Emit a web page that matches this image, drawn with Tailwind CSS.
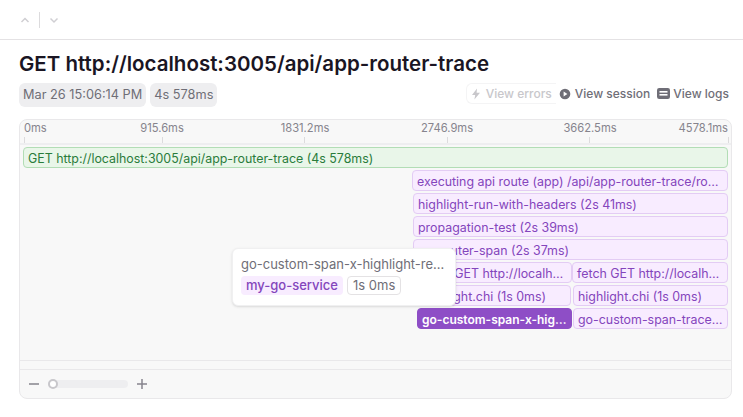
<!DOCTYPE html>
<html lang="en">
<head>
    <meta charset="UTF-8">
    <title>Trace</title>
    <script src="https://cdn.jsdelivr.net/npm/@tailwindcss/browser@4"></script>
</head>
<body class="w-[743px] h-[417px] overflow-hidden bg-white font-['Inter','Liberation_Sans',sans-serif] text-[#6f6e77]">
    <!-- top nav -->
    <div class="h-10 flex items-center pl-[19px] border-b border-[#e4e2e4]">
        <svg class="w-3 h-3" viewBox="0 0 12 12" fill="none" stroke="#d0cfd3" stroke-width="1.5"><path d="M2.5 8 L6 4.5 L9.5 8"/></svg>
        <div class="w-px h-4 bg-[#dcdbdd] mx-[8px]"></div>
        <svg class="w-3 h-3" viewBox="0 0 12 12" fill="none" stroke="#d0cfd3" stroke-width="1.5"><path d="M2.5 4.5 L6 8 L9.5 4.5"/></svg>
    </div>

    <div class="pl-[19px] pr-[11px]">
        <h1 class="mt-3 text-[20.5px] leading-[24px] font-semibold text-[#1a1523] whitespace-nowrap">GET http://localhost:3005/api/app-router-trace</h1>

        <div class="mt-[7px] flex items-start justify-between pr-[3px]">
            <div class="flex gap-1 text-[12.75px]">
                <span class="h-6 leading-6 px-1 rounded-md bg-[#eeeef0]">Mar 26 15:06:14 PM</span>
                <span class="h-6 leading-6 px-1 rounded-md bg-[#eeeef0]">4s 578ms</span>
            </div>
            <div class="flex items-center text-[12px] font-medium">
                <span class="h-[21px] flex items-center gap-1 pl-[3px] pr-1 rounded-l-md border border-r-0 border-[#f4f4f5] text-[#c8c7cb]">
                    <svg class="w-3 h-3" viewBox="0 0 12 12" fill="#c8c7cb"><path d="M7 0.5 L2 7 H5.2 L4.4 11.5 L10 4.8 H6.6 Z"/></svg>
                    View errors
                </span>
                <span class="flex items-center gap-1 ml-[3px]">
                    <svg class="w-3 h-3" viewBox="0 0 12 12"><circle cx="6" cy="6" r="5.3" fill="#6f6e77"/><path d="M4.6 3.6 L8.4 6 L4.6 8.4 Z" fill="#fff"/></svg>
                    View session
                </span>
                <span class="flex items-center gap-[3px] ml-[7px]">
                    <svg class="w-[13px] h-[11px]" viewBox="0 0 13 11"><rect width="13" height="11" rx="2.2" fill="#6f6e77"/><rect x="2.5" y="3" width="8" height="1.6" fill="#fff"/><rect x="2.5" y="6" width="8" height="1.6" fill="#fff"/></svg>
                    View logs
                </span>
            </div>
        </div>

        <!-- timeline panel -->
        <div class="relative mt-3 h-[280px] rounded-lg border border-[#e9e8ea] bg-[#f8f8f8] flex flex-col">
            <div class="relative h-[25px] border-b-2 border-[#eeeef0] text-[11.2px] leading-[16px] text-[#86848d] shrink-0">
                <span class="absolute top-0 left-[4px]">0ms</span>
                <span class="absolute top-0 left-[142px] -translate-x-1/2">915.6ms</span>
                <span class="absolute top-0 left-[285px] -translate-x-1/2">1831.2ms</span>
                <span class="absolute top-0 left-[427px] -translate-x-1/2">2746.9ms</span>
                <span class="absolute top-0 left-[570px] -translate-x-1/2">3662.5ms</span>
                <span class="absolute top-0 left-[708px] -translate-x-full">4578.1ms</span>
                <i class="absolute bottom-0 h-[6px] left-[4px] w-px bg-[#dcdbdd]"></i>
                <i class="absolute bottom-0 h-[6px] left-[142px] w-px bg-[#dcdbdd]"></i>
                <i class="absolute bottom-0 h-[6px] left-[284px] w-px bg-[#dcdbdd]"></i>
                <i class="absolute bottom-0 h-[6px] left-[427px] w-px bg-[#dcdbdd]"></i>
                <i class="absolute bottom-0 h-[6px] left-[569px] w-px bg-[#dcdbdd]"></i>
                <i class="absolute bottom-0 h-[6px] left-[708px] w-px bg-[#dcdbdd]"></i>
            </div>

            <div class="flex-1 pl-[3px] pt-[2px] flex flex-col gap-[2px] text-[12.4px] leading-[21px] text-[#8445bc]">
                <div class="h-[21px] w-[705px] px-1 rounded border border-[#b2ddb5] bg-[#e9f6e9] text-[#297c3b] truncate">GET http://localhost:3005/api/app-router-trace (4s 578ms)</div>
                <div class="h-[21px] ml-[389px] w-[316px] pl-1 pr-[2px] rounded border border-[#e3ccf4] bg-[#f8ecff] truncate">executing api route (app) /api/app-router-trace/route</div>
                <div class="h-[21px] ml-[390px] w-[315px] px-1 rounded border border-[#e3ccf4] bg-[#f8ecff] truncate">highlight-run-with-headers (2s 41ms)</div>
                <div class="h-[21px] ml-[390px] w-[315px] px-1 rounded border border-[#e3ccf4] bg-[#f8ecff] truncate">propagation-test (2s 39ms)</div>
                <div class="h-[21px] ml-[390px] w-[315px] px-1 rounded border border-[#e3ccf4] bg-[#f8ecff] truncate">go-router-span (2s 37ms)</div>
                <div class="h-[21px] ml-[393px] flex">
                    <div class="w-[156px] px-1 rounded border border-[#e3ccf4] bg-[#f8ecff] truncate">fetch GET http://localhost:3005</div>
                    <div class="w-[156px] px-1 rounded border border-[#e3ccf4] bg-[#f8ecff] truncate">fetch GET http://localhost:3005</div>
                </div>
                <div class="h-[21px] ml-[394px] flex gap-[2px]">
                    <div class="w-[154px] px-1 rounded border border-[#e3ccf4] bg-[#f8ecff] truncate">highlight.chi (1s 0ms)</div>
                    <div class="w-[155px] px-1 rounded border border-[#e3ccf4] bg-[#f8ecff] truncate">highlight.chi (1s 0ms)</div>
                </div>
                <div class="h-[21px] ml-[394px] flex gap-px">
                    <div class="w-[155px] px-1 rounded border border-[#8e4ec6] bg-[#8e4ec6] text-white text-[12px] font-semibold truncate">go-custom-span-x-highlight-request</div>
                    <div class="w-[155px] px-1 rounded border border-[#e3ccf4] bg-[#f8ecff] truncate">go-custom-span-trace-request</div>
                </div>
            </div>

            <div class="h-[9px] border-t border-[#e9e8ea] shrink-0"></div>
            <div class="h-[29px] border-t border-[#e9e8ea] flex items-center pl-[9px] shrink-0">
                <svg class="w-[10px] h-[10px]" viewBox="0 0 10 10" stroke="#86848d" stroke-width="1.5"><path d="M0 5 H10"/></svg>
                <div class="relative ml-[9px] w-[80px] h-2 rounded-full bg-[#eeeef0]">
                    <div class="absolute left-0 -top-[1px] w-[10px] h-[10px] rounded-full bg-white border-2 border-[#c8c7cb]"></div>
                </div>
                <svg class="ml-[9px] w-[10px] h-[10px]" viewBox="0 0 10 10" stroke="#86848d" stroke-width="1.5"><path d="M0 5 H10 M5 0 V10"/></svg>
            </div>

            <!-- hover tooltip -->
            <div class="absolute left-[212px] top-[128px] w-[224px] h-[58px] rounded-md bg-white border border-[#f0f0f1] shadow-sm px-2 pt-[5px] text-[13px]">
                <div class="leading-[20px] truncate">go-custom-span-x-highlight-request</div>
                <div class="mt-[2px] flex gap-1">
                    <span class="h-[19px] leading-[19px] px-[5px] rounded bg-[#f8ecff] text-[#8445bc] font-medium">my-go-service</span>
                    <span class="h-[19px] leading-[17px] px-[5px] rounded border border-[#e4e2e4]">1s 0ms</span>
                </div>
            </div>
        </div>
    </div>
</body>
</html>
